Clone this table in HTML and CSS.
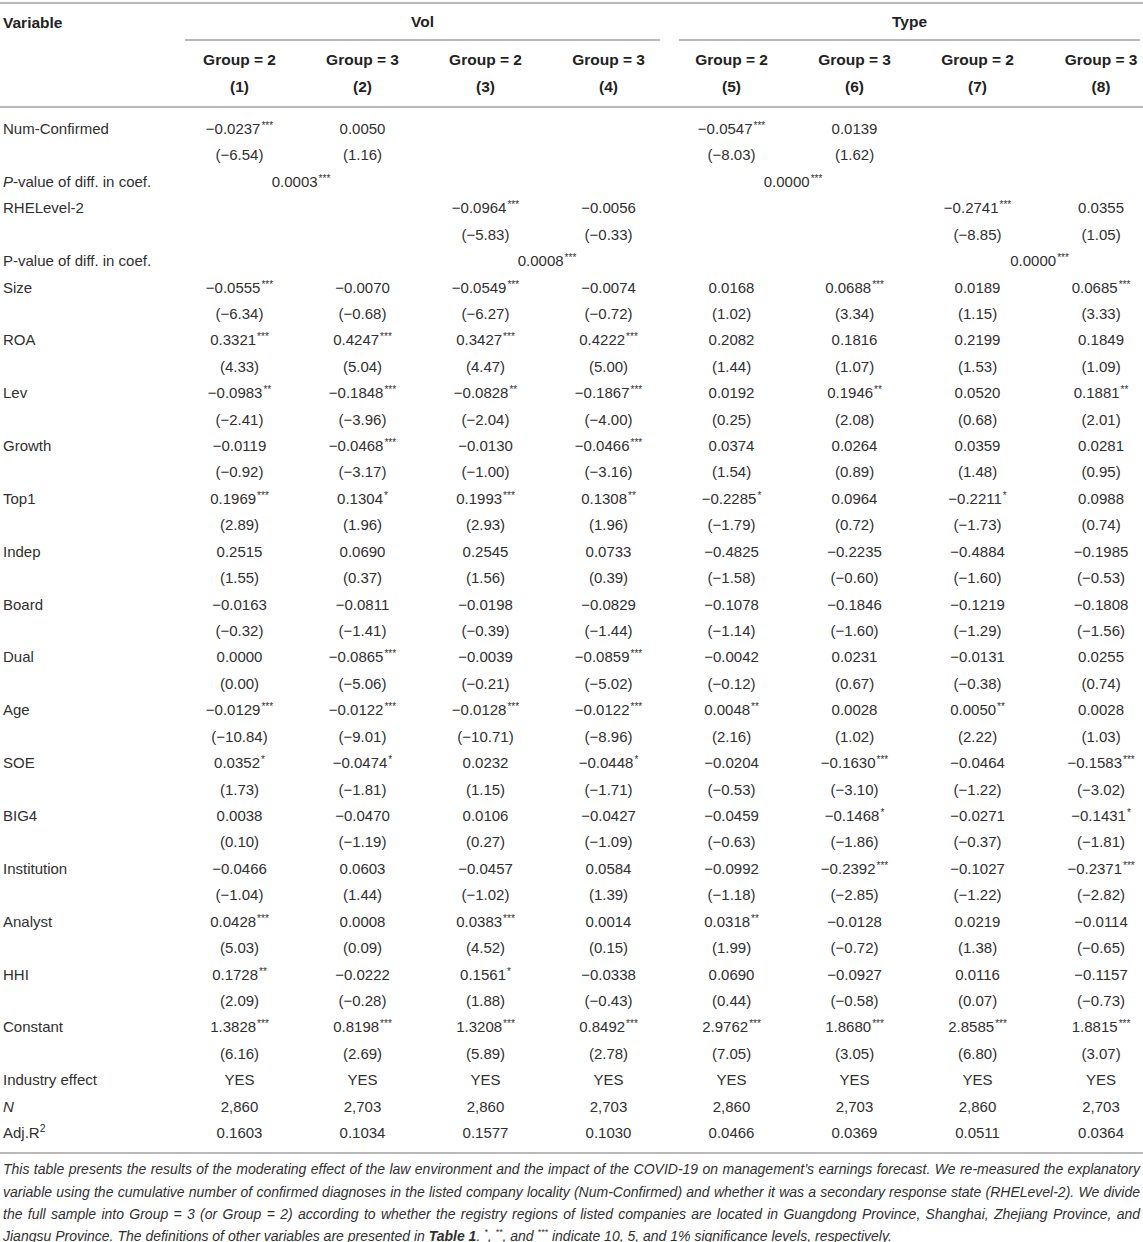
FILE: index.html
```html
<!DOCTYPE html>
<html lang="en">
<head>
<meta charset="utf-8">
<title>Moderating effect of the law environment</title>
<link rel="stylesheet" href="styles.css">
</head>
<body>
<div class="wrap">
<table class="results">
  <colgroup>
    <col class="c-var"><col class="c-num"><col class="c-num"><col class="c-num"><col class="c-num"><col class="c-num"><col class="c-num"><col class="c-num"><col class="c-last">
  </colgroup>
  <thead>
    <tr class="h1">
      <th class="var"><div class="hcell">Variable</div></th>
      <th colspan="4"><div class="hcell span vol">Vol</div></th>
      <th colspan="4" class="last"><div class="hcell span type">Type</div></th>
    </tr>
    <tr class="h2">
      <th class="var"></th>
      <th>Group = 2</th><th>Group = 3</th><th>Group = 2</th><th>Group = 3</th>
      <th>Group = 2</th><th>Group = 3</th><th>Group = 2</th><th>Group = 3</th>
    </tr>
    <tr class="h3">
      <th class="var"></th>
      <th>(1)</th><th>(2)</th><th>(3)</th><th>(4)</th><th>(5)</th><th>(6)</th><th>(7)</th><th>(8)</th>
    </tr>
  </thead>
  <tbody>
    <tr class="first"><td class="var">Num-Confirmed</td><td>−0.0237<sup>***</sup></td><td>0.0050</td><td></td><td></td><td>−0.0547<sup>***</sup></td><td>0.0139</td><td></td><td></td></tr>
    <tr><td class="var"></td><td>(−6.54)</td><td>(1.16)</td><td></td><td></td><td>(−8.03)</td><td>(1.62)</td><td></td><td></td></tr>
    <tr><td class="var"><i>P</i>-value of diff. in coef.</td><td colspan="2">0.0003<sup>***</sup></td><td></td><td></td><td colspan="2">0.0000<sup>***</sup></td><td></td><td></td></tr>
    <tr><td class="var">RHELevel-2</td><td></td><td></td><td>−0.0964<sup>***</sup></td><td>−0.0056</td><td></td><td></td><td>−0.2741<sup>***</sup></td><td>0.0355</td></tr>
    <tr><td class="var"></td><td></td><td></td><td>(−5.83)</td><td>(−0.33)</td><td></td><td></td><td>(−8.85)</td><td>(1.05)</td></tr>
    <tr><td class="var">P-value of diff. in coef.</td><td></td><td></td><td colspan="2">0.0008<sup>***</sup></td><td></td><td></td><td colspan="2">0.0000<sup>***</sup></td></tr>
    <tr><td class="var">Size</td><td>−0.0555<sup>***</sup></td><td>−0.0070</td><td>−0.0549<sup>***</sup></td><td>−0.0074</td><td>0.0168</td><td>0.0688<sup>***</sup></td><td>0.0189</td><td>0.0685<sup>***</sup></td></tr>
    <tr><td class="var"></td><td>(−6.34)</td><td>(−0.68)</td><td>(−6.27)</td><td>(−0.72)</td><td>(1.02)</td><td>(3.34)</td><td>(1.15)</td><td>(3.33)</td></tr>
    <tr><td class="var">ROA</td><td>0.3321<sup>***</sup></td><td>0.4247<sup>***</sup></td><td>0.3427<sup>***</sup></td><td>0.4222<sup>***</sup></td><td>0.2082</td><td>0.1816</td><td>0.2199</td><td>0.1849</td></tr>
    <tr><td class="var"></td><td>(4.33)</td><td>(5.04)</td><td>(4.47)</td><td>(5.00)</td><td>(1.44)</td><td>(1.07)</td><td>(1.53)</td><td>(1.09)</td></tr>
    <tr><td class="var">Lev</td><td>−0.0983<sup>**</sup></td><td>−0.1848<sup>***</sup></td><td>−0.0828<sup>**</sup></td><td>−0.1867<sup>***</sup></td><td>0.0192</td><td>0.1946<sup>**</sup></td><td>0.0520</td><td>0.1881<sup>**</sup></td></tr>
    <tr><td class="var"></td><td>(−2.41)</td><td>(−3.96)</td><td>(−2.04)</td><td>(−4.00)</td><td>(0.25)</td><td>(2.08)</td><td>(0.68)</td><td>(2.01)</td></tr>
    <tr><td class="var">Growth</td><td>−0.0119</td><td>−0.0468<sup>***</sup></td><td>−0.0130</td><td>−0.0466<sup>***</sup></td><td>0.0374</td><td>0.0264</td><td>0.0359</td><td>0.0281</td></tr>
    <tr><td class="var"></td><td>(−0.92)</td><td>(−3.17)</td><td>(−1.00)</td><td>(−3.16)</td><td>(1.54)</td><td>(0.89)</td><td>(1.48)</td><td>(0.95)</td></tr>
    <tr><td class="var">Top1</td><td>0.1969<sup>***</sup></td><td>0.1304<sup>*</sup></td><td>0.1993<sup>***</sup></td><td>0.1308<sup>**</sup></td><td>−0.2285<sup>*</sup></td><td>0.0964</td><td>−0.2211<sup>*</sup></td><td>0.0988</td></tr>
    <tr><td class="var"></td><td>(2.89)</td><td>(1.96)</td><td>(2.93)</td><td>(1.96)</td><td>(−1.79)</td><td>(0.72)</td><td>(−1.73)</td><td>(0.74)</td></tr>
    <tr><td class="var">Indep</td><td>0.2515</td><td>0.0690</td><td>0.2545</td><td>0.0733</td><td>−0.4825</td><td>−0.2235</td><td>−0.4884</td><td>−0.1985</td></tr>
    <tr><td class="var"></td><td>(1.55)</td><td>(0.37)</td><td>(1.56)</td><td>(0.39)</td><td>(−1.58)</td><td>(−0.60)</td><td>(−1.60)</td><td>(−0.53)</td></tr>
    <tr><td class="var">Board</td><td>−0.0163</td><td>−0.0811</td><td>−0.0198</td><td>−0.0829</td><td>−0.1078</td><td>−0.1846</td><td>−0.1219</td><td>−0.1808</td></tr>
    <tr><td class="var"></td><td>(−0.32)</td><td>(−1.41)</td><td>(−0.39)</td><td>(−1.44)</td><td>(−1.14)</td><td>(−1.60)</td><td>(−1.29)</td><td>(−1.56)</td></tr>
    <tr><td class="var">Dual</td><td>0.0000</td><td>−0.0865<sup>***</sup></td><td>−0.0039</td><td>−0.0859<sup>***</sup></td><td>−0.0042</td><td>0.0231</td><td>−0.0131</td><td>0.0255</td></tr>
    <tr><td class="var"></td><td>(0.00)</td><td>(−5.06)</td><td>(−0.21)</td><td>(−5.02)</td><td>(−0.12)</td><td>(0.67)</td><td>(−0.38)</td><td>(0.74)</td></tr>
    <tr><td class="var">Age</td><td>−0.0129<sup>***</sup></td><td>−0.0122<sup>***</sup></td><td>−0.0128<sup>***</sup></td><td>−0.0122<sup>***</sup></td><td>0.0048<sup>**</sup></td><td>0.0028</td><td>0.0050<sup>**</sup></td><td>0.0028</td></tr>
    <tr><td class="var"></td><td>(−10.84)</td><td>(−9.01)</td><td>(−10.71)</td><td>(−8.96)</td><td>(2.16)</td><td>(1.02)</td><td>(2.22)</td><td>(1.03)</td></tr>
    <tr><td class="var">SOE</td><td>0.0352<sup>*</sup></td><td>−0.0474<sup>*</sup></td><td>0.0232</td><td>−0.0448<sup>*</sup></td><td>−0.0204</td><td>−0.1630<sup>***</sup></td><td>−0.0464</td><td>−0.1583<sup>***</sup></td></tr>
    <tr><td class="var"></td><td>(1.73)</td><td>(−1.81)</td><td>(1.15)</td><td>(−1.71)</td><td>(−0.53)</td><td>(−3.10)</td><td>(−1.22)</td><td>(−3.02)</td></tr>
    <tr><td class="var">BIG4</td><td>0.0038</td><td>−0.0470</td><td>0.0106</td><td>−0.0427</td><td>−0.0459</td><td>−0.1468<sup>*</sup></td><td>−0.0271</td><td>−0.1431<sup>*</sup></td></tr>
    <tr><td class="var"></td><td>(0.10)</td><td>(−1.19)</td><td>(0.27)</td><td>(−1.09)</td><td>(−0.63)</td><td>(−1.86)</td><td>(−0.37)</td><td>(−1.81)</td></tr>
    <tr><td class="var">Institution</td><td>−0.0466</td><td>0.0603</td><td>−0.0457</td><td>0.0584</td><td>−0.0992</td><td>−0.2392<sup>***</sup></td><td>−0.1027</td><td>−0.2371<sup>***</sup></td></tr>
    <tr><td class="var"></td><td>(−1.04)</td><td>(1.44)</td><td>(−1.02)</td><td>(1.39)</td><td>(−1.18)</td><td>(−2.85)</td><td>(−1.22)</td><td>(−2.82)</td></tr>
    <tr><td class="var">Analyst</td><td>0.0428<sup>***</sup></td><td>0.0008</td><td>0.0383<sup>***</sup></td><td>0.0014</td><td>0.0318<sup>**</sup></td><td>−0.0128</td><td>0.0219</td><td>−0.0114</td></tr>
    <tr><td class="var"></td><td>(5.03)</td><td>(0.09)</td><td>(4.52)</td><td>(0.15)</td><td>(1.99)</td><td>(−0.72)</td><td>(1.38)</td><td>(−0.65)</td></tr>
    <tr><td class="var">HHI</td><td>0.1728<sup>**</sup></td><td>−0.0222</td><td>0.1561<sup>*</sup></td><td>−0.0338</td><td>0.0690</td><td>−0.0927</td><td>0.0116</td><td>−0.1157</td></tr>
    <tr><td class="var"></td><td>(2.09)</td><td>(−0.28)</td><td>(1.88)</td><td>(−0.43)</td><td>(0.44)</td><td>(−0.58)</td><td>(0.07)</td><td>(−0.73)</td></tr>
    <tr><td class="var">Constant</td><td>1.3828<sup>***</sup></td><td>0.8198<sup>***</sup></td><td>1.3208<sup>***</sup></td><td>0.8492<sup>***</sup></td><td>2.9762<sup>***</sup></td><td>1.8680<sup>***</sup></td><td>2.8585<sup>***</sup></td><td>1.8815<sup>***</sup></td></tr>
    <tr><td class="var"></td><td>(6.16)</td><td>(2.69)</td><td>(5.89)</td><td>(2.78)</td><td>(7.05)</td><td>(3.05)</td><td>(6.80)</td><td>(3.07)</td></tr>
    <tr><td class="var">Industry effect</td><td>YES</td><td>YES</td><td>YES</td><td>YES</td><td>YES</td><td>YES</td><td>YES</td><td>YES</td></tr>
    <tr><td class="var"><i>N</i></td><td>2,860</td><td>2,703</td><td>2,860</td><td>2,703</td><td>2,860</td><td>2,703</td><td>2,860</td><td>2,703</td></tr>
    <tr class="end"><td class="var">Adj.R<sup class="pow">2</sup></td><td>0.1603</td><td>0.1034</td><td>0.1577</td><td>0.1030</td><td>0.0466</td><td>0.0369</td><td>0.0511</td><td>0.0364</td></tr>
  </tbody>
</table>
<p class="note">
  <span class="ln">This table presents the results of the moderating effect of the law environment and the impact of the COVID-19 on management’s earnings forecast. We re-measured the explanatory</span>
  <span class="ln">variable using the cumulative number of confirmed diagnoses in the listed company locality (Num-Confirmed) and whether it was a secondary response state (RHELevel-2). We divide</span>
  <span class="ln">the full sample into Group = 3 (or Group = 2) according to whether the registry regions of listed companies are located in Guangdong Province, Shanghai, Zhejiang Province, and</span>
  <span class="ln lastln">Jiangsu Province. The definitions of other variables are presented in <b>Table 1</b>. <sup>*</sup>, <sup>**</sup>, and <sup>***</sup> indicate 10, 5, and 1% significance levels, respectively.</span>
</p>
</div>
</body>
</html>
```

FILE: styles.css
```css
html, body {
  margin: 0;
  padding: 0;
  background: #ffffff;
}

body {
  font-family: "Liberation Sans", Arial, sans-serif;
  font-size: 15px;
  color: #303030;
}

.wrap {
  width: 1141px;
  padding-top: 2px;
}

.results {
  width: 1143px;
  border-collapse: collapse;
  table-layout: fixed;
  border-top: 2px solid #b8b8b8;
}

.c-var { width: 178px; }
.c-num { width: 123px; }
.c-last { width: 104px; }

.results th,
.results td {
  padding: 0;
  text-align: center;
  white-space: nowrap;
}

.results th:last-child,
.results td:last-child {
  padding-left: 20px;
}

.results th.last {
  padding-left: 0;
}

.results .var {
  text-align: left;
  padding-left: 3px;
}

/* header */
.results th {
  font-weight: bold;
  font-size: 15.5px;
  color: #222222;
}

.hcell {
  height: 35px;
  line-height: 36px;
}

.hcell.span {
  border-bottom: 2px solid #b8b8b8;
}

.hcell.vol {
  margin: 0 10px 0 7px;
}

.hcell.type {
  margin: 0 3px 0 9px;
}

.h2 th {
  padding-top: 8px;
  line-height: 22px;
}

.h3 th {
  padding-top: 5px;
  padding-bottom: 8px;
  line-height: 22px;
  border-bottom: 2px solid #b8b8b8;
}

/* body */
.results td {
  line-height: 26.42px;
  vertical-align: top;
}

.results tr.first td {
  padding-top: 8px;
}

.results tr.end td {
  padding-bottom: 6px;
  border-bottom: 2px solid #b8b8b8;
}

.results sup {
  font-size: 10px;
  line-height: 0;
  vertical-align: 5px;
  margin-left: 1px;
}

.results sup.pow {
  font-size: 10.5px;
  vertical-align: 6px;
  margin-left: 0;
}

/* note */
.note {
  margin: 4px 0 0 3px;
  width: 1137px;
  font-style: italic;
  font-size: 14px;
  line-height: 22.3px;
  color: #303030;
}

.note .ln {
  display: block;
  text-align: justify;
  text-align-last: justify;
  white-space: nowrap;
}

.note .ln.lastln {
  text-align-last: left;
}

.note sup {
  font-size: 9px;
  line-height: 0;
  vertical-align: 6px;
}

.note b {
  font-weight: bold;
}
```
